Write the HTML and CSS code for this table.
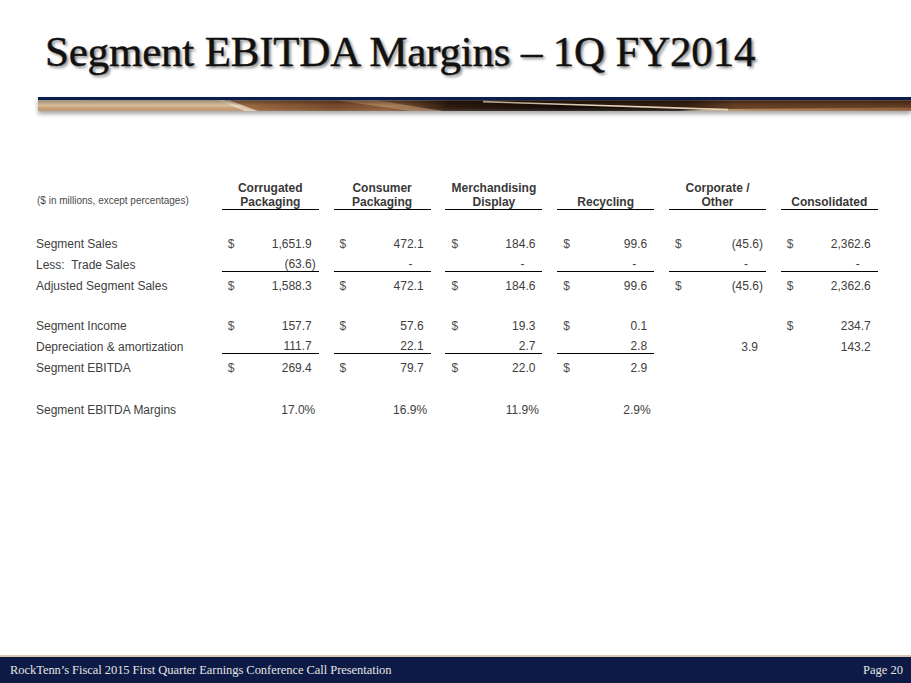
FILE: index.html
```html
<!DOCTYPE html>
<html lang="en">
<head>
<meta charset="utf-8">
<title>Segment EBITDA Margins – 1Q FY2014</title>
<link rel="stylesheet" href="styles.css">
</head>
<body>
<div class="slide">
  <header class="head">
    <h1 class="title">Segment EBITDA Margins – 1Q FY2014</h1>
    <div class="rule">
      <svg class="rule-art" viewBox="0 0 873 14" preserveAspectRatio="none" aria-hidden="true">
        <defs>
          <linearGradient id="base" gradientUnits="userSpaceOnUse" x1="0" y1="0" x2="873" y2="0">
            <stop offset="0" stop-color="#d7b28a"/>
            <stop offset="0.24" stop-color="#9a6a42"/>
            <stop offset="0.34" stop-color="#7a4a2b"/>
            <stop offset="0.40" stop-color="#8c5c3a"/>
            <stop offset="0.47" stop-color="#2e1a0f"/>
            <stop offset="0.60" stop-color="#120a06"/>
            <stop offset="0.74" stop-color="#1c1008"/>
            <stop offset="0.80" stop-color="#8a5a34"/>
            <stop offset="1" stop-color="#7e4f2c"/>
          </linearGradient>
          <linearGradient id="tan" x1="0" y1="0" x2="0" y2="1">
            <stop offset="0" stop-color="#f0dcc0"/>
            <stop offset="0.5" stop-color="#dcbb94"/>
            <stop offset="1" stop-color="#b88c60"/>
          </linearGradient>
          <linearGradient id="shade" x1="0" y1="0" x2="0" y2="1">
            <stop offset="0" stop-color="#000" stop-opacity="0.35"/>
            <stop offset="0.5" stop-color="#000" stop-opacity="0"/>
            <stop offset="1" stop-color="#fff" stop-opacity="0.15"/>
          </linearGradient>
          <linearGradient id="glow" gradientUnits="userSpaceOnUse" x1="640" y1="0" x2="873" y2="0">
            <stop offset="0" stop-color="#f2e0c4" stop-opacity="0.9"/>
            <stop offset="0.3" stop-color="#c89a6a" stop-opacity="0.6"/>
            <stop offset="1" stop-color="#a87648" stop-opacity="0.3"/>
          </linearGradient>
        </defs>
        <rect x="0" y="0" width="873" height="3.5" fill="#0c1e4c"/>
        <rect x="0" y="3.5" width="873" height="10.5" fill="url(#base)"/>
        <polygon points="0,3.5 186,3.5 214,14 0,14" fill="url(#tan)"/>
        <polygon points="180,3.5 192,3.5 220,14 207,14" fill="#f4e4cc" opacity="0.75"/>
        <polygon points="300,3.5 340,3.5 405,14 372,14" fill="#c9a078" opacity="0.55"/>
        <polygon points="445,3.5 873,3.5 873,11 700,12" fill="#4a2c18" opacity="0.55"/>
        <polygon points="640,14 690,12 873,10 873,14" fill="url(#glow)"/>
        <path d="M445 4.6 L690 12.6" stroke="#ecd8ba" stroke-width="1.6" fill="none"/>
        <rect x="0" y="3.5" width="873" height="10.5" fill="url(#shade)"/>
      </svg>
    </div>
  </header>

  <main class="content">
    <div class="fin">
      <div class="row hdr">
        <div class="lbl note">($ in millions, except percentages)</div>
        <div class="h">Corrugated<br>Packaging</div>
        <div class="h">Consumer<br>Packaging</div>
        <div class="h">Merchandising<br>Display</div>
        <div class="h">Recycling</div>
        <div class="h">Corporate /<br>Other</div>
        <div class="h">Consolidated</div>
      </div>

      <div class="row first">
        <div class="lbl">Segment Sales</div>
        <div class="c"><span class="cur">$</span><span class="n">1,651.9</span></div>
        <div class="c"><span class="cur">$</span><span class="n">472.1</span></div>
        <div class="c"><span class="cur">$</span><span class="n">184.6</span></div>
        <div class="c"><span class="cur">$</span><span class="n">99.6</span></div>
        <div class="c"><span class="cur">$</span><span class="p">(45.6)</span></div>
        <div class="c"><span class="cur">$</span><span class="n">2,362.6</span></div>
      </div>
      <div class="row">
        <div class="lbl">Less:&nbsp; Trade Sales</div>
        <div class="c ul"><span class="cur"></span><span class="p">(63.6)</span></div>
        <div class="c ul"><span class="cur"></span><span class="d">-</span></div>
        <div class="c ul"><span class="cur"></span><span class="d">-</span></div>
        <div class="c ul"><span class="cur"></span><span class="d">-</span></div>
        <div class="c ul"><span class="cur"></span><span class="d">-</span></div>
        <div class="c ul"><span class="cur"></span><span class="d">-</span></div>
      </div>
      <div class="row">
        <div class="lbl">Adjusted Segment Sales</div>
        <div class="c"><span class="cur">$</span><span class="n">1,588.3</span></div>
        <div class="c"><span class="cur">$</span><span class="n">472.1</span></div>
        <div class="c"><span class="cur">$</span><span class="n">184.6</span></div>
        <div class="c"><span class="cur">$</span><span class="n">99.6</span></div>
        <div class="c"><span class="cur">$</span><span class="p">(45.6)</span></div>
        <div class="c"><span class="cur">$</span><span class="n">2,362.6</span></div>
      </div>

      <div class="row gap-a">
        <div class="lbl">Segment Income</div>
        <div class="c"><span class="cur">$</span><span class="n">157.7</span></div>
        <div class="c"><span class="cur">$</span><span class="n">57.6</span></div>
        <div class="c"><span class="cur">$</span><span class="n">19.3</span></div>
        <div class="c"><span class="cur">$</span><span class="n">0.1</span></div>
        <div class="c"></div>
        <div class="c"><span class="cur">$</span><span class="n">234.7</span></div>
      </div>
      <div class="row">
        <div class="lbl">Depreciation &amp; amortization</div>
        <div class="c ul"><span class="cur"></span><span class="n">111.7</span></div>
        <div class="c ul"><span class="cur"></span><span class="n">22.1</span></div>
        <div class="c ul"><span class="cur"></span><span class="n">2.7</span></div>
        <div class="c ul"><span class="cur"></span><span class="n">2.8</span></div>
        <div class="c"><span class="cur"></span><span class="o">3.9</span></div>
        <div class="c"><span class="cur"></span><span class="n">143.2</span></div>
      </div>
      <div class="row">
        <div class="lbl">Segment EBITDA</div>
        <div class="c"><span class="cur">$</span><span class="n">269.4</span></div>
        <div class="c"><span class="cur">$</span><span class="n">79.7</span></div>
        <div class="c"><span class="cur">$</span><span class="n">22.0</span></div>
        <div class="c"><span class="cur">$</span><span class="n">2.9</span></div>
        <div class="c"></div>
        <div class="c"></div>
      </div>

      <div class="row gap-b">
        <div class="lbl">Segment EBITDA Margins</div>
        <div class="c"><span class="cur"></span><span class="pct">17.0%</span></div>
        <div class="c"><span class="cur"></span><span class="pct">16.9%</span></div>
        <div class="c"><span class="cur"></span><span class="pct">11.9%</span></div>
        <div class="c"><span class="cur"></span><span class="pct">2.9%</span></div>
        <div class="c"></div>
        <div class="c"></div>
      </div>
    </div>
  </main>

  <footer class="foot">
    <span class="foot-title">RockTenn’s Fiscal 2015 First Quarter Earnings Conference Call Presentation</span>
    <span class="foot-page">Page 20</span>
  </footer>
</div>
</body>
</html>
```

FILE: styles.css
```css
html, body {
  margin: 0;
  padding: 0;
  background: #ffffff;
}

.slide {
  width: 911px;
  height: 683px;
  display: flex;
  flex-direction: column;
  overflow: hidden;
  background: #ffffff;
}

/* ---------- header ---------- */
.head {
  display: flex;
  flex-direction: column;
}

.title {
  margin: 27px 0 0 0;
  padding-left: 45px;
  font-family: "Liberation Serif", "Times New Roman", serif;
  font-weight: normal;
  font-size: 43px;
  line-height: 50px;
  color: #111111;
  letter-spacing: -0.2px;
  white-space: nowrap;
  -webkit-text-stroke: 0.45px #111111;
  text-shadow: 2px 2px 3px rgba(0, 0, 0, 0.5);
}

.rule {
  margin: 20px 0 0 38px;
  height: 14px;
  filter: drop-shadow(0 3px 2px rgba(0, 0, 0, 0.35));
}

.rule-art {
  display: block;
  width: 873px;
  height: 14px;
}

/* ---------- table ---------- */
.content {
  padding: 70px 0 0 36px;
}

.fin {
  font-family: "Liberation Sans", Arial, sans-serif;
  font-size: 12px;
  color: #404040;
}

.row {
  display: grid;
  grid-template-columns: 171px repeat(6, 97px);
  column-gap: 14.8px;
  height: 21px;
}

.row.hdr {
  height: auto;
  align-items: end;
}

.row.first {
  margin-top: 20px;
}

.row.gap-a {
  margin-top: 19px;
}

.row.gap-b {
  margin-top: 20.5px;
}

.lbl {
  padding-top: 7px;
  line-height: 14px;
  white-space: nowrap;
}

.lbl.note {
  padding: 0 0 2px 1px;
  font-size: 10px;
  line-height: 14px;
  color: #4a4a4a;
}

.h {
  font-weight: bold;
  color: #383838;
  text-align: center;
  line-height: 14px;
  border-bottom: 1px solid #000000;
}

.c {
  box-sizing: border-box;
  height: 21px;
  padding: 7px 0 0 6px;
  line-height: 14px;
  display: flex;
  justify-content: space-between;
  white-space: nowrap;
}

.c.ul {
  line-height: 13px;
  border-bottom: 1px solid #000000;
}

.cur {
  color: #505050;
}

.n { padding-right: 7px; }
.p { padding-right: 3px; }
.d { padding-right: 18px; }
.o { padding-right: 8px; }
.pct { padding-right: 3.5px; }

/* ---------- footer ---------- */
.foot {
  margin-top: auto;
  height: 26px;
  border-top: 2px solid #d8cab0;
  background: #0c1a45;
  display: flex;
  justify-content: space-between;
  align-items: center;
  padding: 0 8px 0 10px;
  font-family: "Liberation Serif", "Times New Roman", serif;
  font-size: 12.5px;
  line-height: 26px;
  color: #e4e4e4;
}

.foot-title {
  letter-spacing: -0.05px;
}
```
